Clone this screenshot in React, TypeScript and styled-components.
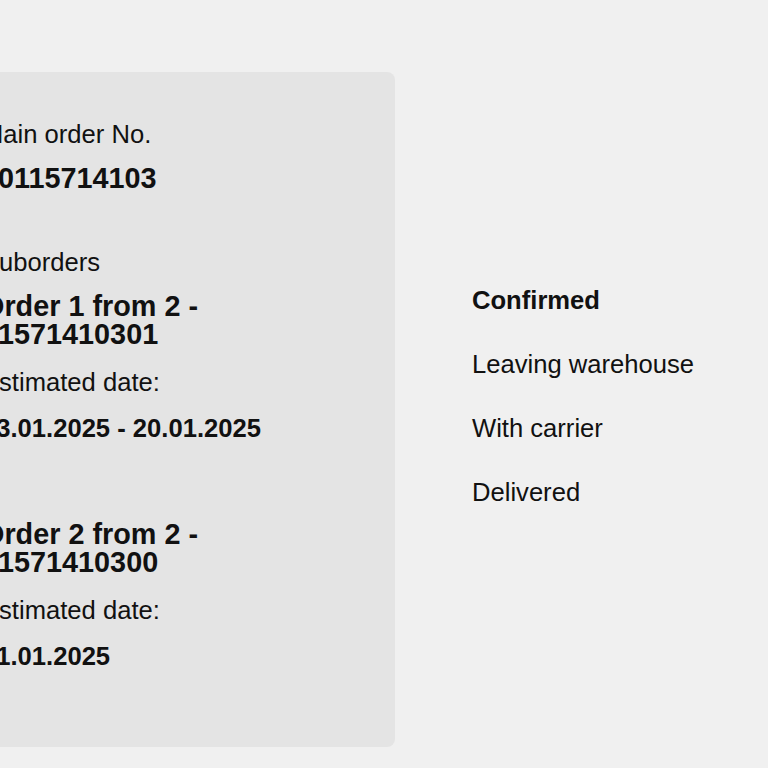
import React from 'react';
import styled, { createGlobalStyle } from 'styled-components';

const GlobalStyle = createGlobalStyle`
  html, body {
    margin: 0;
    padding: 0;
    background: #f0f0f0;
    overflow: hidden;
  }
  body {
    font-family: 'Liberation Sans', Arial, sans-serif;
    color: #111;
  }
`;

const Page = styled.div`
  width: 768px;
  height: 768px;
  overflow: hidden;
  padding-top: 72px;
  box-sizing: border-box;
`;

const Layout = styled.div`
  display: flex;
  align-items: flex-start;
  gap: 77px;
  margin-left: -58px;
`;

const Card = styled.section`
  width: 453px;
  box-sizing: border-box;
  padding: 48.4px 40px 75px 40px;
  background: #e4e4e4;
  border-radius: 8px;
  display: flex;
  flex-direction: column;
`;

const Label = styled.div<{ $gap?: number }>`
  font-size: 25.6px;
  line-height: 1.15;
  margin-top: ${({ $gap }) => $gap ?? 0}px;
`;

const BigNumber = styled.div<{ $gap?: number }>`
  font-size: 28.8px;
  line-height: 1;
  font-weight: 700;
  margin-top: ${({ $gap }) => $gap ?? 0}px;
`;

const SubHeading = styled.h3<{ $gap?: number }>`
  font-size: 28.8px;
  line-height: 1;
  font-weight: 700;
  margin: ${({ $gap }) => $gap ?? 0}px 0 0 0;
`;

const DateValue = styled.div<{ $gap?: number }>`
  font-size: 25.6px;
  line-height: 1.15;
  font-weight: 700;
  margin-top: ${({ $gap }) => $gap ?? 0}px;
`;

const StatusList = styled.ul`
  list-style: none;
  margin: 0;
  padding: 213.9px 0 0 0;
  display: flex;
  flex-direction: column;
  gap: 34.56px;
`;

const StatusItem = styled.li<{ $active?: boolean }>`
  font-size: 25.6px;
  line-height: 1.15;
  font-weight: ${({ $active }) => ($active ? 700 : 400)};
`;

type Suborder = {
  index: number;
  total: number;
  number: string;
  date: string;
};

const suborders: Suborder[] = [
  { index: 1, total: 2, number: '01571410301', date: '13.01.2025 - 20.01.2025' },
  { index: 2, total: 2, number: '01571410300', date: '21.01.2025' },
];

const statuses = ['Confirmed', 'Leaving warehouse', 'With carrier', 'Delivered'];

export default function App() {
  return (
    <>
      <GlobalStyle />
      <Page>
        <Layout>
          <Card>
            <Label>Main order No.</Label>
            <BigNumber $gap={13.7}>30115714103</BigNumber>

            <Label $gap={56}>Suborders</Label>
            {suborders.map((s, i) => (
              <React.Fragment key={s.number}>
                <SubHeading $gap={i === 0 ? 13.8 : 75.8}>
                  Order {s.index} from {s.total} - {s.number}
                </SubHeading>
                <Label $gap={19.2}>Estimated date:</Label>
                <DateValue $gap={16.6}>{s.date}</DateValue>
              </React.Fragment>
            ))}
          </Card>

          <StatusList>
            {statuses.map((s, i) => (
              <StatusItem key={s} $active={i === 0}>
                {s}
              </StatusItem>
            ))}
          </StatusList>
        </Layout>
      </Page>
    </>
  );
}
